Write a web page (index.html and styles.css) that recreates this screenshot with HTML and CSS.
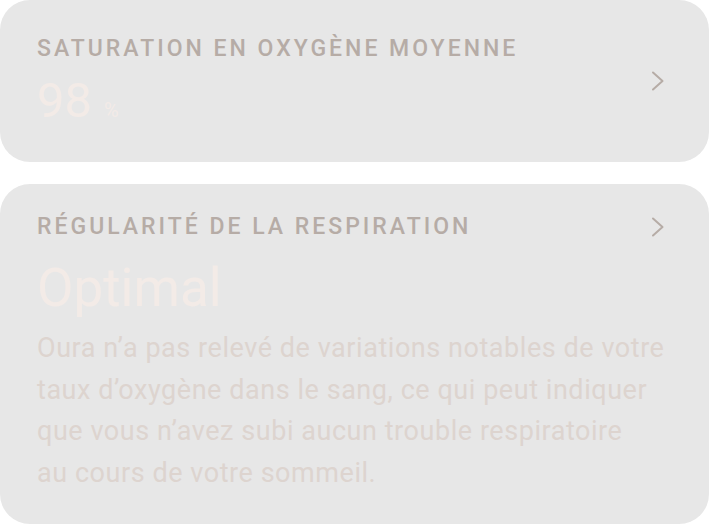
FILE: index.html
```html
<!DOCTYPE html>
<html lang="fr">
<head>
    <meta charset="UTF-8">
    <meta name="viewport" content="width=device-width, initial-scale=1.0">
    <title>Sommeil</title>
    <link rel="stylesheet" href="styles.css">
</head>
<body>

    <div class="carte carte-spo2">
        <div class="carte-contenu">
            <h3 class="titre">Saturation en oxygène moyenne</h3>
            <div class="valeur">98<span class="unite">%</span></div>
        </div>
        <svg class="chevron" width="14" height="20" viewBox="0 0 14 20">
            <path d="M2 1.5 L11.5 10 L2 18.5" />
        </svg>
    </div>

    <div class="carte carte-respi">
        <div class="entete">
            <h3 class="titre">Régularité de la respiration</h3>
            <svg class="chevron" width="14" height="20" viewBox="0 0 14 20">
                <path d="M2 1.5 L11.5 10 L2 18.5" />
            </svg>
        </div>
        <div class="statut">Optimal</div>
        <p class="description">Oura n’a pas relevé de variations notables de votre<br>
            taux d’oxygène dans le sang, ce qui peut indiquer<br>
            que vous n’avez subi aucun trouble respiratoire<br>
            au cours de votre sommeil.</p>
    </div>

</body>
</html>
```

FILE: styles.css
```css
body {
    margin: 0;
    background-color: #ffffff;
    font-family: Roboto, "Liberation Sans", sans-serif;
}

.carte {
    width: 709px;
    box-sizing: border-box;
    background-color: #e7e7e7;
    border-radius: 30px;
    padding: 0 44px 0 37px;
}

.carte-spo2 {
    height: 162px;
    padding-top: 35px;
    display: flex;
    align-items: flex-start;
    justify-content: space-between;
}

.carte-spo2 .chevron {
    align-self: center;
    margin-top: -35px;
}

.carte-respi {
    margin-top: 22px;
    height: 340px;
    padding-top: 29px;
}

.titre {
    margin: 0;
    font-size: 23px;
    font-weight: 500;
    letter-spacing: 3px;
    text-transform: uppercase;
    color: #b6aca6;
    line-height: 28px;
}

.valeur {
    font-size: 49px;
    line-height: 56px;
    color: #f3ebe7;
    margin-top: 10px;
}

.unite {
    font-size: 20px;
    margin-left: 12px;
}

.chevron {
    display: block;
    flex-shrink: 0;
}

.chevron path {
    fill: none;
    stroke: #b6aca6;
    stroke-width: 2;
    stroke-linecap: round;
    stroke-linejoin: round;
}

.entete {
    display: flex;
    align-items: center;
    justify-content: space-between;
}

.statut {
    font-size: 53px;
    line-height: 60px;
    color: #f3ebe7;
    margin-top: 17px;
}

.description {
    margin: 10px 0 0;
    font-size: 27px;
    line-height: 41.7px;
    letter-spacing: 0.55px;
    white-space: nowrap;
    color: #ddd4cf;
}
```
